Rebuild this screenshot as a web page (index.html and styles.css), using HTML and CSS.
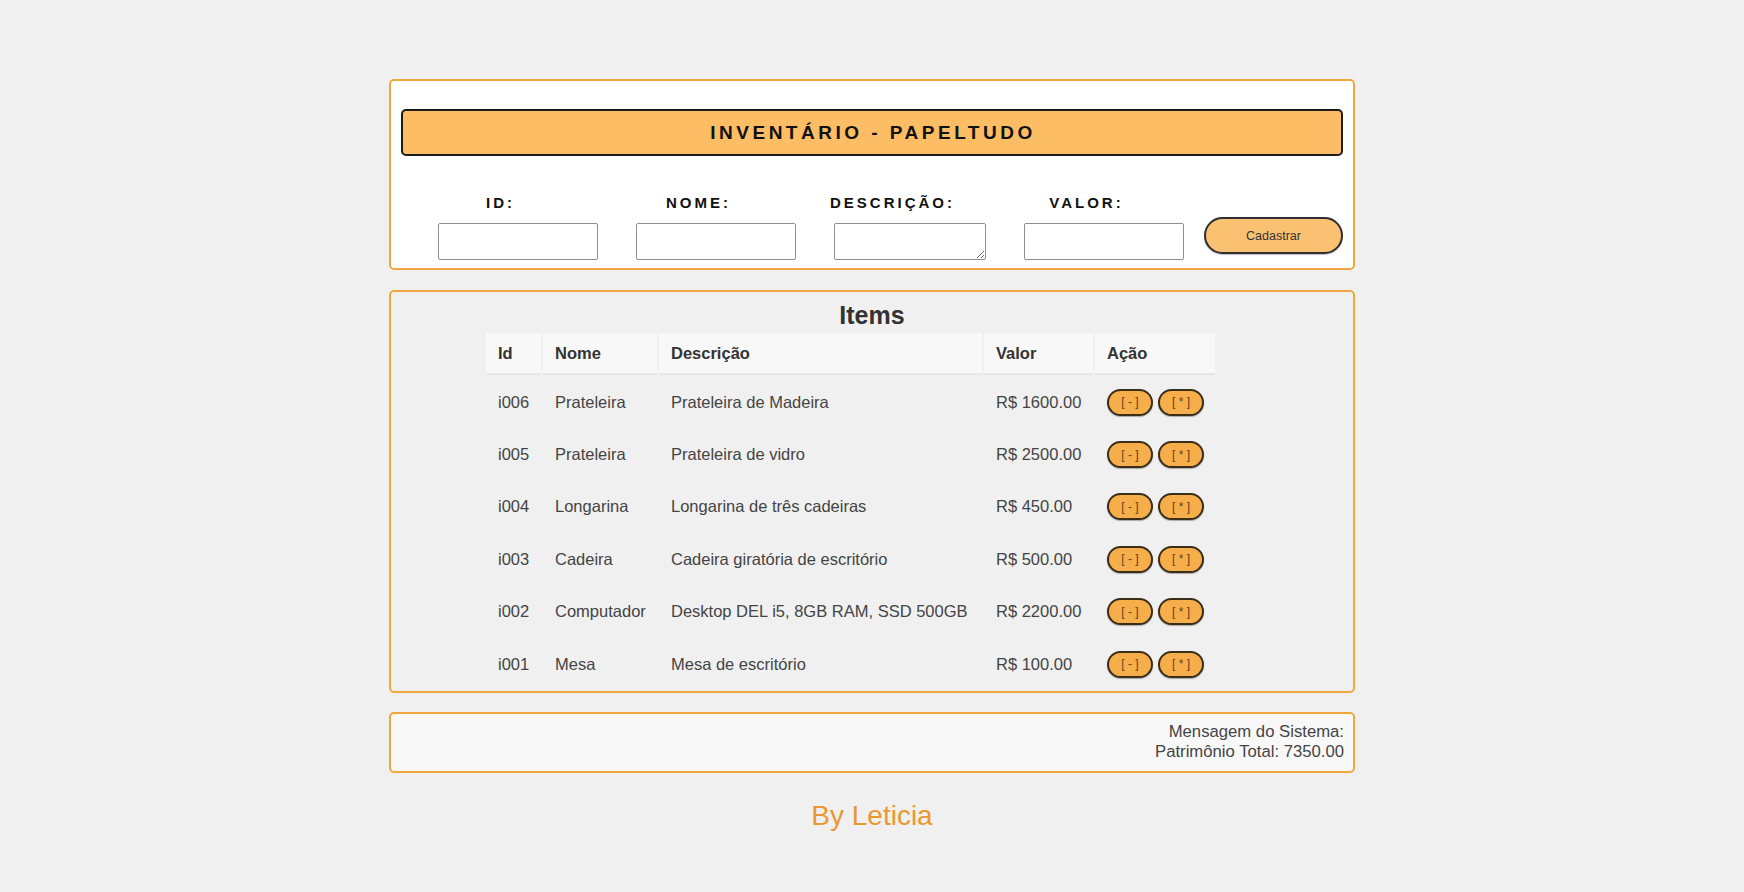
FILE: index.html
```html
<!DOCTYPE html>
<html lang="pt-BR">
<head>
<meta charset="utf-8">
<title>Inventário - Papeltudo</title>
<link rel="stylesheet" href="styles.css">
</head>
<body>
<div class="page">
  <section class="panel panel-form">
    <h1 class="title">INVENTÁRIO - PAPELTUDO</h1>
    <div class="form-row">
      <div class="field">
        <label>ID:</label>
        <input type="text" class="input">
      </div>
      <div class="field">
        <label>NOME:</label>
        <input type="text" class="input">
      </div>
      <div class="field field-desc">
        <label>DESCRIÇÃO:</label>
        <textarea class="input textarea"></textarea>
      </div>
      <div class="field">
        <label>VALOR:</label>
        <input type="text" class="input">
      </div>
      <button class="btn-cadastrar">Cadastrar</button>
    </div>
  </section>

  <section class="panel panel-items">
    <h2 class="items-title">Items</h2>
    <table class="items-table">
      <thead>
        <tr>
          <th class="c-id">Id</th>
          <th class="c-nome">Nome</th>
          <th class="c-desc">Descrição</th>
          <th class="c-valor">Valor</th>
          <th class="c-acao">Ação</th>
        </tr>
      </thead>
      <tbody>
        <tr><td>i006</td><td>Prateleira</td><td>Prateleira de Madeira</td><td>R$ 1600.00</td><td><button class="act">[ - ]</button><button class="act">[ * ]</button></td></tr>
        <tr><td>i005</td><td>Prateleira</td><td>Prateleira de vidro</td><td>R$ 2500.00</td><td><button class="act">[ - ]</button><button class="act">[ * ]</button></td></tr>
        <tr><td>i004</td><td>Longarina</td><td>Longarina de três cadeiras</td><td>R$ 450.00</td><td><button class="act">[ - ]</button><button class="act">[ * ]</button></td></tr>
        <tr><td>i003</td><td>Cadeira</td><td>Cadeira giratória de escritório</td><td>R$ 500.00</td><td><button class="act">[ - ]</button><button class="act">[ * ]</button></td></tr>
        <tr><td>i002</td><td>Computador</td><td>Desktop DEL i5, 8GB RAM, SSD 500GB</td><td>R$ 2200.00</td><td><button class="act">[ - ]</button><button class="act">[ * ]</button></td></tr>
        <tr><td>i001</td><td>Mesa</td><td>Mesa de escritório</td><td>R$ 100.00</td><td><button class="act">[ - ]</button><button class="act">[ * ]</button></td></tr>
      </tbody>
    </table>
  </section>

  <section class="panel panel-msg">
    <div>Mensagem do Sistema:</div>
    <div>Patrimônio Total: 7350.00</div>
  </section>

  <footer class="footer">By Leticia</footer>
</div>
</body>
</html>
```

FILE: styles.css
```css
html, body {
  margin: 0;
  padding: 0;
}

body {
  background: #f0f0f0;
  font-family: "Liberation Sans", Arial, sans-serif;
  color: #444;
}

.page {
  width: 966px;
  margin: 0 auto;
  padding-top: 79px;
}

.panel {
  border: 2px solid #efa73e;
  border-radius: 5px;
  box-sizing: border-box;
}

/* ---------- form panel ---------- */
.panel-form {
  background: #ffffff;
  padding: 0 10px 8px;
}

.title {
  margin: 28px 0 0;
  height: 47px;
  box-sizing: border-box;
  border: 2px solid #1b1b1b;
  border-radius: 5px;
  background: #fcbd64;
  color: #111;
  font-size: 19px;
  font-weight: bold;
  letter-spacing: 3.5px;
  line-height: 43px;
  text-align: center;
  padding-left: 2px;
}

.form-row {
  display: flex;
  align-items: flex-end;
  margin-top: 38px;
  padding-left: 37px;
}

.field {
  display: flex;
  flex-direction: column;
  align-items: center;
  width: 160px;
}

.field-desc {
  width: 152px;
}

.field + .field {
  margin-left: 38px;
}

.field label {
  font-size: 15px;
  font-weight: bold;
  letter-spacing: 3px;
  line-height: 18px;
  color: #111;
  padding-right: 35px;
  margin-bottom: 11px;
  white-space: nowrap;
}

.input {
  width: 160px;
  height: 37px;
  box-sizing: border-box;
  border: 1px solid #8f8f8f;
  border-radius: 2px;
  background: #fff;
  margin: 0;
  font-family: inherit;
}

.textarea {
  width: 152px;
  resize: both;
  display: block;
}

.btn-cadastrar {
  margin-left: 20px;
  margin-bottom: 6px;
  width: 139px;
  height: 37px;
  border: 2px solid #2f2f2f;
  border-radius: 19px;
  background: #fac172;
  color: #333;
  font-family: inherit;
  font-size: 12.5px;
  padding: 0;
  box-shadow: 0 1px 1px rgba(0, 0, 0, 0.25);
}

/* ---------- items panel ---------- */
.panel-items {
  margin-top: 20px;
  background: #f0f0f0;
}

.items-title {
  margin: 9px 0 2px;
  font-size: 25px;
  line-height: 28px;
  font-weight: bold;
  color: #333;
  text-align: center;
}

.items-table {
  margin-left: 93px;
  border-spacing: 2px;
  table-layout: fixed;
  width: 733px;
  font-size: 16.5px;
}

.items-table th,
.items-table td {
  box-sizing: border-box;
  padding: 0 12px;
  text-align: left;
  white-space: nowrap;
}

.items-table th {
  height: 42px;
  background: #f8f8f8;
  color: #333;
  font-weight: bold;
  border-bottom: 2px solid #e6e6e6;
}

.items-table td {
  height: 50.4px;
  color: #444;
  vertical-align: middle;
}

.c-id { width: 55px; }
.c-nome { width: 114px; }
.c-desc { width: 323px; }
.c-valor { width: 109px; }
.c-acao { width: 120px; }

.act {
  display: inline-block;
  vertical-align: middle;
  width: 46px;
  height: 27px;
  padding: 0;
  border: 2px solid #3b2e18;
  border-radius: 14px;
  background: #f6ae4b;
  color: #5a4422;
  font-family: inherit;
  font-size: 12px;
  box-shadow: 0 1px 1px rgba(0, 0, 0, 0.3);
}

.act + .act {
  margin-left: 5px;
}

/* ---------- message panel ---------- */
.panel-msg {
  margin-top: 19px;
  background: #f8f8f8;
  padding: 8px 9px 9px 10px;
  text-align: right;
  font-size: 16.7px;
  line-height: 20px;
  color: #444;
}

.footer {
  margin-top: 27px;
  text-align: center;
  font-size: 28px;
  line-height: 32px;
  color: #ea972f;
}
```
